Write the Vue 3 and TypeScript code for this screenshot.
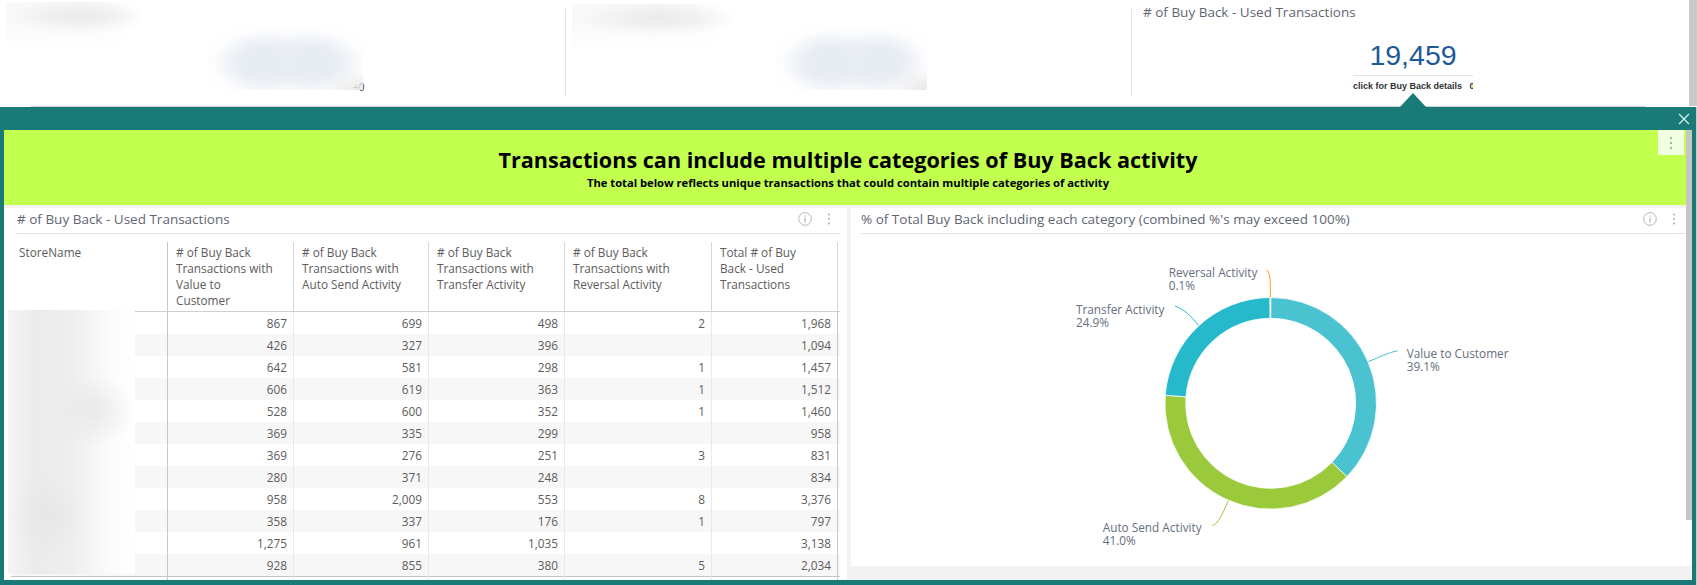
<script setup lang="ts">
const headers: string[] = [
  'StoreName',
  '# of Buy Back Transactions with Value to Customer',
  '# of Buy Back Transactions with Auto Send Activity',
  '# of Buy Back Transactions with Transfer Activity',
  '# of Buy Back Transactions with Reversal Activity',
  'Total # of Buy Back - Used Transactions',
]
const rows: string[][] = [
  ['867', '699', '498', '2', '1,968'],
  ['426', '327', '396', '', '1,094'],
  ['642', '581', '298', '1', '1,457'],
  ['606', '619', '363', '1', '1,512'],
  ['528', '600', '352', '1', '1,460'],
  ['369', '335', '299', '', '958'],
  ['369', '276', '251', '3', '831'],
  ['280', '371', '248', '', '834'],
  ['958', '2,009', '553', '8', '3,376'],
  ['358', '337', '176', '1', '797'],
  ['1,275', '961', '1,035', '', '3,138'],
  ['928', '855', '380', '5', '2,034'],
]
const cx = 1270.7
const cy = 403.3
const R = 105.8
const r = 85
const values = [
  { v: 39.1, color: '#4ac2cf' },
  { v: 41.0, color: '#9aca3c' },
  { v: 24.9, color: '#26b9cb' },
  { v: 0.1, color: '#f5a623' },
]
const total = values.reduce((s, x) => s + x.v, 0)
function pt(rad: number, a: number): string {
  return `${(cx + rad * Math.sin(a)).toFixed(2)} ${(cy - rad * Math.cos(a)).toFixed(2)}`
}
let acc = 0
const slices = values.map((s) => {
  const a0 = (acc / total) * Math.PI * 2
  acc += s.v
  const a1 = (acc / total) * Math.PI * 2
  const large = a1 - a0 > Math.PI ? 1 : 0
  return {
    color: s.color,
    d: `M${pt(R, a0)} A${R} ${R} 0 ${large} 1 ${pt(R, a1)} L${pt(r, a1)} A${r} ${r} 0 ${large} 0 ${pt(r, a0)} Z`,
  }
})
const labels = [
  { x: 1406.7, y: 358, t: 'Value to Customer' },
  { x: 1406.7, y: 370.6, t: '39.1%' },
  { x: 1076, y: 314, t: 'Transfer Activity' },
  { x: 1076, y: 326.6, t: '24.9%' },
  { x: 1168.7, y: 277.3, t: 'Reversal Activity' },
  { x: 1168.7, y: 289.9, t: '0.1%' },
  { x: 1102.7, y: 532, t: 'Auto Send Activity' },
  { x: 1102.7, y: 544.6, t: '41.0%' },
]
const leaders = [
  { d: 'M1368.3 361.7 C1380 357 1388 352.5 1397.7 350.7', c: '#4ac2cf' },
  { d: 'M1198.5 325.3 C1191 316 1184 309 1175 306', c: '#26b9cb' },
  { d: 'M1270.3 297.5 C1270.5 285 1271 272 1266 269.5', c: '#f5a623' },
  { d: 'M1228.3 500.7 C1222 515 1218 524 1212.5 525.5', c: '#9aca3c' },
]
</script>

<template>
  <div class="page">
    <div class="top">
      <div class="kpis">
        <section class="kpi kpi-a">
          <span class="tail">+0</span>
          <div class="smudge-title"></div>
          <div class="smudge-value"></div>
        </section>
        <i class="divider"></i>
        <section class="kpi kpi-b">
          <div class="smudge-title"></div>
          <div class="smudge-value"></div>
        </section>
        <i class="divider"></i>
        <section class="kpi kpi-c">
          <div class="kpi-title"># of Buy Back - Used Transactions</div>
          <div class="kpi-box">
            <div class="kpi-value">19,459</div>
            <div class="kpi-link">click for Buy Back details&nbsp;&nbsp;&nbsp;0</div>
          </div>
        </section>
      </div>
      <div class="page-scroll"></div>
    </div>

    <div class="rule-row"><div class="rule"></div></div>

    <div class="modal">
      <span class="arrow"></span>
      <div class="modal-bar">
        <svg class="close" width="12" height="12" viewBox="0 0 12 12">
          <path d="M1 1 L11 11 M11 1 L1 11" stroke="#d9eceb" stroke-width="1.3" fill="none" />
        </svg>
      </div>
      <div class="modal-body">
        <div class="thumb"></div>
        <div class="banner">
          <h1>Transactions can include multiple categories of Buy Back activity</h1>
          <p>The total below reflects unique transactions that could contain multiple categories of activity</p>
          <div class="banner-menu">
            <svg width="4" height="14" viewBox="0 0 4 14">
              <circle cx="2" cy="2" r="1" fill="#8f9a86" />
              <circle cx="2" cy="7" r="1" fill="#8f9a86" />
              <circle cx="2" cy="12" r="1" fill="#8f9a86" />
            </svg>
          </div>
        </div>
        <div class="panels">
          <section class="panel panel-left">
            <header class="head">
              <span class="head-title"># of Buy Back - Used Transactions</span>
              <svg class="info" width="14" height="14" viewBox="0 0 14 14">
                <circle cx="7" cy="7" r="6.3" fill="none" stroke="#b4b7bb" />
                <path d="M7 6 V10.5 M7 3.6 V4.8" stroke="#9ea2a7" fill="none" />
              </svg>
              <svg class="dots" width="4" height="14" viewBox="0 0 4 14">
                <circle cx="2" cy="2.5" r="1" fill="#a9adb2" />
                <circle cx="2" cy="7" r="1" fill="#a9adb2" />
                <circle cx="2" cy="11.5" r="1" fill="#a9adb2" />
              </svg>
            </header>
            <table class="grid">
              <colgroup>
                <col class="c0" /><col class="c1" /><col class="c2" /><col class="c3" /><col class="c4" /><col class="c5" /><col class="c6" />
              </colgroup>
              <thead>
                <tr>
                  <th v-for="h in headers" :key="h">{{ h }}</th>
                  <th class="spare"></th>
                </tr>
              </thead>
              <tbody>
                <tr v-for="(row, i) in rows" :key="i">
                  <td></td>
                  <td v-for="(c, j) in row" :key="j">{{ c }}</td>
                  <td class="spare"></td>
                </tr>
                <tr class="totals">
                  <td></td><td></td><td></td><td></td><td></td><td></td><td class="spare"></td>
                </tr>
              </tbody>
            </table>
            <div class="smudge-stores"></div>
          </section>

          <section class="panel panel-right">
            <header class="head">
              <span class="head-title">% of Total Buy Back including each category (combined %'s may exceed 100%)</span>
              <svg class="info" width="14" height="14" viewBox="0 0 14 14">
                <circle cx="7" cy="7" r="6.3" fill="none" stroke="#b4b7bb" />
                <path d="M7 6 V10.5 M7 3.6 V4.8" stroke="#9ea2a7" fill="none" />
              </svg>
              <svg class="dots" width="4" height="14" viewBox="0 0 4 14">
                <circle cx="2" cy="2.5" r="1" fill="#a9adb2" />
                <circle cx="2" cy="7" r="1" fill="#a9adb2" />
                <circle cx="2" cy="11.5" r="1" fill="#a9adb2" />
              </svg>
            </header>
            <svg class="chart" width="841" height="332" viewBox="851 234 841 332">
              <path v-for="s in slices" :key="s.color" :d="s.d" :fill="s.color" stroke="#fff" stroke-width="0.8" />
              <path v-for="l in leaders" :key="l.c" :d="l.d" :stroke="l.c" fill="none" stroke-width="1" />
              <text v-for="l in labels" :key="l.t" class="label" :x="l.x" :y="l.y">{{ l.t }}</text>
            </svg>
          </section>
        </div>
      </div>
    </div>
  </div>
</template>

<style>
html, body { margin: 0; overflow: hidden; background: #fff; }
</style>

<style scoped>
.page {
  width: 1697px;
  height: 585px;
  overflow: hidden;
  display: flex;
  flex-direction: column;
  background: #c9c9c9;
  font-family: "Open Sans", "Liberation Sans", sans-serif;
  color: #5f6672;
}
.top { display: flex; height: 106px; background: #fff; }
.kpis { flex: 1; display: flex; }
.page-scroll { width: 8px; background: #c9c9c9; }
.kpi { position: relative; height: 106px; box-sizing: border-box; }
.kpi-a { width: 565px; }
.kpi-b { width: 565px; }
.kpi-c { flex: 1; padding: 3px 0 0 11px; }
.divider { width: 1px; margin: 9px 0 10px; background: #e3e3e3; display: block; }
.smudge-title {
  position: absolute;
  left: 6px;
  top: 2px;
  width: 146px;
  height: 46px;
  background:
    radial-gradient(ellipse 45% 42% at 50% 32%, #ebebec 0%, #f0f0f1 45%, rgba(255,255,255,0) 100%),
    linear-gradient(90deg, #f8f8f8 0%, #fafafa 65%, rgba(255,255,255,0) 90%);
  -webkit-mask-image: linear-gradient(180deg, #000 0%, #000 40%, transparent 100%);
  mask-image: linear-gradient(180deg, #000 0%, #000 40%, transparent 100%);
}
.kpi-b .smudge-title { left: 6px; top: 4px; width: 172px; height: 46px; }
.smudge-value {
  position: absolute;
  left: 207px;
  top: 25px;
  width: 156px;
  height: 65px;
  background:
    radial-gradient(ellipse 22% 32% at 98% 100%, #e8e8e8 0%, rgba(232,232,232,0) 100%),
    radial-gradient(ellipse 32% 50% at 36% 58%, #e5eaf1 0%, #e8ecf3 45%, rgba(255,255,255,0) 100%),
    radial-gradient(ellipse 32% 50% at 68% 58%, #e5eaf1 0%, #e8ecf3 45%, rgba(255,255,255,0) 100%),
    radial-gradient(ellipse 62% 70% at 52% 58%, #f4f6f9 0%, rgba(255,255,255,0) 100%);
}
.kpi-b .smudge-value { left: 209px; top: 25px; width: 152px; height: 65px; }
.tail {
  position: absolute;
  left: 353px;
  top: 83px;
  width: 12px;
  font: 10px/10px "Liberation Sans", sans-serif;
  color: #333;
  overflow: hidden;
}
.kpi-title { font-size: 13.5px; line-height: 18px; color: #5f6672; white-space: nowrap; }
.kpi-box { width: 120px; margin: 16px 0 0 210px; }
.kpi-value {
  font: 28.5px/36px "Liberation Sans", sans-serif;
  color: #1f5a96;
  text-align: center;
  padding-bottom: 2px;
  border-bottom: 1px solid #e3e3e3;
}
.kpi-link {
  margin-top: 3px;
  font: bold 9px/14px "Liberation Sans", sans-serif;
  color: #333;
  white-space: nowrap;
  overflow: hidden;
}
.rule-row { height: 1px; background: #fff; padding-left: 31px; }
.rule { width: 1614px; height: 1px; background: #cfcfcf; }
.modal {
  position: relative;
  width: 1696px;
  height: 478px;
  box-sizing: border-box;
  padding: 0 4px 5px;
  background: #1a7a78;
  display: flex;
  flex-direction: column;
}
.arrow {
  position: absolute;
  left: 1400px;
  top: -14px;
  width: 0;
  height: 0;
  border-left: 13.5px solid transparent;
  border-right: 13.5px solid transparent;
  border-bottom: 14px solid #1a7a78;
}
.modal-bar { height: 23px; flex: none; display: flex; justify-content: flex-end; align-items: center; padding-right: 2px; }
.modal-body {
  position: relative;
  width: 1688px;
  height: 450px;
  overflow: hidden;
  background: #f2f2f2;
}
.thumb { position: absolute; right: 0; top: 0; width: 6px; height: 390px; background: #c6c6c6; z-index: 2; }
.banner {
  position: relative;
  width: 1682px;
  height: 75px;
  box-sizing: border-box;
  padding: 14px 0 0 6px;
  background: #c2ff4f;
  text-align: center;
  color: #000;
}
.banner h1 { margin: 0; font-size: 21.6px; line-height: 31px; font-weight: 700; }
.banner p { margin: 0; font-size: 11.2px; line-height: 16px; font-weight: 700; }
.banner-menu {
  position: absolute;
  right: 2px;
  top: 0;
  width: 26px;
  height: 25px;
  background: #f0ffdf;
  display: flex;
  align-items: center;
  justify-content: center;
}
.panels { display: flex; gap: 4px; margin-top: 3px; align-items: flex-start; }
.panel { position: relative; background: #fff; }
.panel-left { width: 843px; height: 372px; }
.panel-right { flex: 1; height: 358px; }
.head {
  display: flex;
  align-items: center;
  height: 22px;
  padding: 0 9px 3px 0;
  margin: 0 7px 0 12px;
  border-bottom: 1px solid #e4e4e4;
}
.panel-right .head { margin-left: 10px; }
.head-title { font-size: 13.5px; line-height: 22px; color: #5f6672; white-space: nowrap; }
.panel-left .head-title { padding-left: 1px; }
.info { margin-left: auto; }
.dots { margin-left: 15px; }
.grid {
  table-layout: fixed;
  width: 829px;
  margin: 8px 0 0 7px;
  border-collapse: separate;
  border-spacing: 0;
  font-size: 11.8px;
  color: #5c5c5c;
}
.c0 { width: 157px; }
.c1 { width: 126px; }
.c2 { width: 135px; }
.c3 { width: 136px; }
.c4 { width: 147px; }
.c5 { width: 126px; }
.c6 { width: 2px; }
th {
  height: 70px;
  box-sizing: border-box;
  padding: 2px 20px 0 8px;
  text-align: left;
  vertical-align: top;
  font-weight: 400;
  line-height: 16px;
  border-right: 1px solid #d6d6d6;
  border-bottom: 1px solid #cfcfcf;
}
th:first-child { padding-left: 8px; border-right-color: #c6c6c6; }
td {
  height: 22px;
  box-sizing: border-box;
  padding: 0 6px;
  text-align: right;
  line-height: 22px;
  border-right: 1px solid #e9e9e9;
}
td:first-child { border-right-color: #c6c6c6; }
td:nth-child(6) { border-right-color: #c6c6c6; }
th.spare, td.spare { padding: 0; border-right: 0; }
tbody tr:nth-child(even) td { background: #f7f7f7; }
.totals td { border-top: 1px solid #c6c6c6; background: #fff; }
.smudge-stores {
  position: absolute;
  left: 4px;
  top: 102px;
  width: 127px;
  height: 264px;
  background:
    radial-gradient(ellipse 35% 14% at 65% 38%, #e9e9e9 0%, rgba(233,233,233,0) 100%),
    radial-gradient(ellipse 30% 16% at 30% 78%, #e7e7e7 0%, rgba(231,231,231,0) 100%),
    linear-gradient(90deg, #f5f5f5 0%, #ebebeb 22%, #eeeeee 50%, #fbfbfb 80%, #fff 100%);
}
.chart { display: block; }
.label { font-size: 11.8px; fill: #666e7e; }
</style>
